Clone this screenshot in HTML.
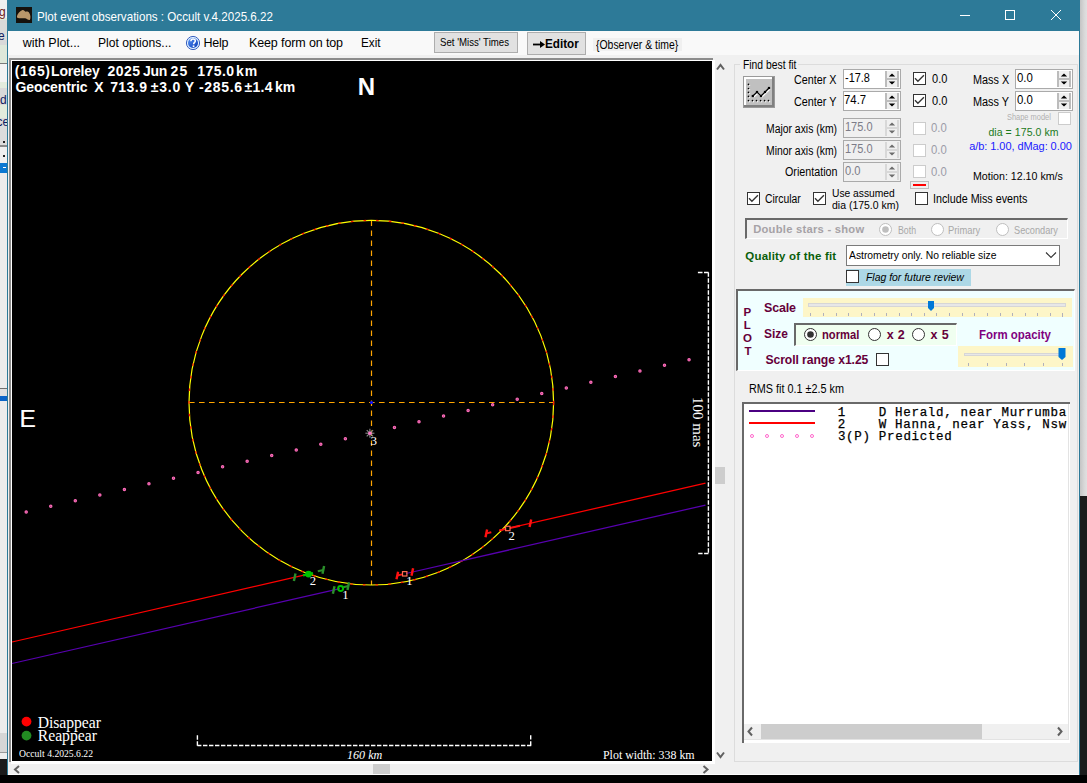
<!DOCTYPE html><html><head><meta charset="utf-8"><style>
html,body{margin:0;padding:0;}
body{width:1087px;height:783px;position:relative;overflow:hidden;background:#000;}
.r{position:absolute;}
.t{position:absolute;white-space:pre;}
svg{overflow:visible;}
</style></head><body>
<div class="r" style="left:0px;top:0px;width:7px;height:3px;background:#f0f0f0;"></div>
<div class="r" style="left:0px;top:3px;width:7px;height:15px;background:#efefef;"></div>
<div class="r" style="left:0px;top:18px;width:7px;height:2px;background:#dfe9d8;"></div>
<div class="r" style="left:0px;top:20px;width:7px;height:25px;background:#d9d9d9;"></div>
<div class="r" style="left:0px;top:45px;width:7px;height:17px;background:#dee8da;"></div>
<div class="r" style="left:0px;top:62px;width:7px;height:1px;background:#dee8da;"></div>
<div class="r" style="left:0px;top:63px;width:7px;height:1px;background:#7a7a7a;"></div>
<div class="r" style="left:0px;top:64px;width:7px;height:18px;background:#f3f3f3;"></div>
<div class="r" style="left:0px;top:82px;width:7px;height:6px;background:#e3ecdd;"></div>
<div class="r" style="left:0px;top:88px;width:7px;height:17px;background:#d9d9d9;"></div>
<div class="r" style="left:0px;top:105px;width:7px;height:13px;background:#e3ecdd;"></div>
<div class="r" style="left:0px;top:118px;width:7px;height:27px;background:#dcdcdc;"></div>
<div class="r" style="left:0px;top:145px;width:7px;height:2px;background:#8a8a8a;"></div>
<div class="r" style="left:0px;top:147px;width:7px;height:16px;background:#f0f0f0;"></div>
<div class="r" style="left:0px;top:163px;width:7px;height:10px;background:#0a78d2;"></div>
<div class="r" style="left:0px;top:173px;width:7px;height:215px;background:#ececec;"></div>
<div class="r" style="left:0px;top:388px;width:7px;height:1px;background:#707070;"></div>
<div class="r" style="left:0px;top:389px;width:7px;height:7px;background:#e0e0e0;"></div>
<div class="r" style="left:0px;top:396px;width:7px;height:5px;background:#0a64c8;"></div>
<div class="r" style="left:0px;top:401px;width:7px;height:332px;background:#ececec;"></div>
<div class="r" style="left:0px;top:733px;width:7px;height:19px;background:#d6d6d6;"></div>
<div class="r" style="left:0px;top:752px;width:7px;height:1px;background:#9a9a9a;"></div>
<div class="r" style="left:0px;top:753px;width:7px;height:6px;background:#eeeeee;"></div>
<div class="r" style="left:0px;top:759px;width:7px;height:24px;background:#1a1a1a;"></div>
<div class="r" style="left:0;top:0;width:7px;height:200px;overflow:hidden;"><div class="t" style="left:-3.78px;top:6px;font-family:'Liberation Sans', sans-serif;font-size:12px;line-height:12px;color:#6a1a1a;">ig</div>
<div class="t" style="left:-1.98px;top:30px;font-family:'Liberation Sans', sans-serif;font-size:12px;line-height:12px;color:#102060;">e</div>
<div class="t" style="left:-6.78px;top:94px;font-family:'Liberation Sans', sans-serif;font-size:12px;line-height:12px;color:#102060;">ud</div>
<div class="t" style="left:-3.48px;top:116px;font-family:'Liberation Sans', sans-serif;font-size:12px;line-height:12px;color:#102060;">ce</div>
<div class="r" style="left:3px;top:141px;width:2px;height:2px;background:#222;"></div>
<div class="r" style="left:3px;top:155px;width:2px;height:2px;background:#222;"></div>
<div class="r" style="left:3px;top:167px;width:3px;height:1px;background:#fff;"></div>
</div><div class="r" style="left:1080px;top:0px;width:7px;height:496px;background:linear-gradient(to right,#c4c4c4,#d8d8d8 60%,#e0e0e0);"></div>
<div class="r" style="left:1080px;top:496px;width:7px;height:287px;background:#1b1b1b;"></div>
<div class="r" style="left:0px;top:775px;width:1087px;height:8px;background:#000;"></div>
<div class="r" style="left:7px;top:0px;width:1073px;height:775px;background:#2d7a98;"></div>
<div class="r" style="left:8px;top:31px;width:1071px;height:743px;background:#f0f0f0;"></div>
<div class="r" style="left:8px;top:31px;width:1071px;height:24px;background:#f9f9f9;"></div>
<div class="r" style="left:8px;top:774px;width:1071px;height:1px;background:#fdfdfd;"></div>
<div class="t" style="left:36.77px;top:10px;font-family:'Liberation Sans', sans-serif;font-size:13px;line-height:13px;color:#fff;transform:scaleX(0.8928);transform-origin:0 0;">Plot event observations : Occult v.4.2025.6.22</div>
<svg class="r" style="left:16px;top:7px" width="16" height="16" viewBox="0 0 16 16"><rect width="16" height="16" fill="#15110c"/>
<path d="M1 9 C1.5 6.5 4 4 6.5 3 C8 2.8 8.8 4.2 9.5 4.8 C10.5 4.3 12 4 13 5.5 C14.5 7.5 15 11 13.8 13 C12 13.2 10.5 11.5 9 11.3 C7 11 4 11.5 2 11 C1 10.7 0.8 10 1 9Z" fill="#b9976a"/></svg>
<svg class="r" style="left:950px;top:0px" width="129" height="31" viewBox="950 0 129 31"><line x1="960" y1="15.5" x2="970" y2="15.5" stroke="#fff" stroke-width="1"/><rect x="1005.5" y="10.5" width="9" height="9" fill="none" stroke="#fff" stroke-width="1"/><line x1="1051" y1="10" x2="1061" y2="20" stroke="#fff" stroke-width="1"/><line x1="1061" y1="10" x2="1051" y2="20" stroke="#fff" stroke-width="1"/></svg>
<div class="t" style="left:22.80px;top:37px;font-family:'Liberation Sans', sans-serif;font-size:12.5px;line-height:12.5px;color:#000;letter-spacing:-0.033px;">with Plot...</div>
<div class="t" style="left:97.63px;top:37px;font-family:'Liberation Sans', sans-serif;font-size:12.5px;line-height:12.5px;color:#000;transform:scaleX(0.9698);transform-origin:0 0;">Plot options...</div>
<svg class="r" style="left:185px;top:35px" width="16" height="16" viewBox="0 0 16 16"><defs><linearGradient id="hg" x1="0" y1="0" x2="1" y2="1"><stop offset="0" stop-color="#5a96f5"/><stop offset="1" stop-color="#0838b8"/></linearGradient></defs><circle cx="8" cy="8" r="6.6" fill="#dbeeff" stroke="#3a60c0" stroke-width="1"/><circle cx="8" cy="8" r="5" fill="url(#hg)"/><path d="M5.9 6.2 C5.9 4.6 7 4 8.1 4 C9.4 4 10.3 4.8 10.3 5.9 C10.3 7.3 8.6 7.5 8.6 9.2" fill="none" stroke="#fff" stroke-width="1.5"/><rect x="7.7" y="10.4" width="1.7" height="1.7" fill="#fff"/></svg>
<div class="t" style="left:203.50px;top:37px;font-family:'Liberation Sans', sans-serif;font-size:12.5px;line-height:12.5px;color:#000;letter-spacing:-0.229px;">Help</div>
<div class="t" style="left:249.00px;top:37px;font-family:'Liberation Sans', sans-serif;font-size:12.5px;line-height:12.5px;color:#000;letter-spacing:-0.125px;">Keep form on top</div>
<div class="t" style="left:361.06px;top:37px;font-family:'Liberation Sans', sans-serif;font-size:12.5px;line-height:12.5px;color:#000;transform:scaleX(0.9367);transform-origin:0 0;">Exit</div>
<div class="r" style="left:434px;top:32px;width:84px;height:21px;background:#e1e1e1;border:1px solid #adadad;box-sizing:border-box;"></div>
<div class="t" style="left:440.37px;top:37px;font-family:'Liberation Sans', sans-serif;font-size:10.5px;line-height:10.5px;color:#000;transform:scaleX(0.9174);transform-origin:0 0;">Set &#x27;Miss&#x27; Times</div>
<div class="r" style="left:527px;top:32px;width:59px;height:23px;background:#e1e1e1;border:1px solid #adadad;box-sizing:border-box;"></div>
<div class="t" style="left:544.74px;top:38px;font-family:'Liberation Sans', sans-serif;font-size:12.5px;line-height:12.5px;color:#000;font-weight:bold;transform:scaleX(0.9367);transform-origin:0 0;">Editor</div>
<svg class="r" style="left:532px;top:39px" width="14" height="11" viewBox="0 0 14 11"><path d="M1 5.5 H10" stroke="#000" stroke-width="1.8"/><path d="M8 2 L13 5.5 L8 9Z" fill="#000"/></svg>
<div class="r" style="left:593px;top:38px;width:89px;height:13px;background:#f0f0f0;"></div>
<div class="t" style="left:595.84px;top:39px;font-family:'Liberation Sans', sans-serif;font-size:12px;line-height:12px;color:#000;transform:scaleX(0.8683);transform-origin:0 0;">{Observer &amp; time}</div>
<div class="r" style="left:9px;top:58px;width:704px;height:2px;background:#8c8c8c;"></div>
<div class="r" style="left:9px;top:58px;width:2px;height:704px;background:#8c8c8c;"></div>
<div class="r" style="left:11px;top:60px;width:704px;height:704px;background:#fff;"></div>
<div class="r" style="left:12px;top:61px;width:700px;height:700px;background:#000;"></div>
<div class="r" style="left:715px;top:61px;width:20px;height:700px;background:#f0f0f0;"></div>
<div class="r" style="left:715px;top:467px;width:10px;height:17px;background:#cdcdcd;"></div>
<div class="r" style="left:8px;top:764px;width:707px;height:10px;background:#f0f0f0;"></div>
<div class="r" style="left:373px;top:764px;width:17px;height:10px;background:#cdcdcd;"></div>
<svg class="r" style="left:0;top:0" width="1087" height="783" viewBox="0 0 1087 783"><polyline points="717,69.5 720.5,65 724,69.5" fill="none" stroke="#606060" stroke-width="2"/><polyline points="717,752.5 720.5,757 724,752.5" fill="none" stroke="#606060" stroke-width="2"/><polyline points="19,766 15,769.5 19,773" fill="none" stroke="#606060" stroke-width="2"/><polyline points="703.5,766 707.5,769.5 703.5,773" fill="none" stroke="#606060" stroke-width="2"/></svg>
<svg class="r" style="left:12px;top:61px" width="700" height="700" viewBox="12 61 700 700"><line x1="189" y1="402.5" x2="553.6" y2="402.5" stroke="#ffa500" stroke-width="1.2" stroke-dasharray="5.6 4.4"/><line x1="371.5" y1="220.4" x2="371.5" y2="585" stroke="#ffa500" stroke-width="1.2" stroke-dasharray="5.6 4.4"/><circle cx="371.3" cy="402.7" r="182.3" fill="none" stroke="#ffff00" stroke-width="1.2"/><circle cx="371.3" cy="402.7" r="182.3" fill="none" stroke="#ff1a00" stroke-width="1.3" stroke-dasharray="2.6 10.1"/><circle cx="371.5" cy="402.5" r="1.6" fill="#1010ff"/><line x1="12" y1="642.00" x2="305" y2="574.90" stroke="#ff0000" stroke-width="1.25"/><line x1="499" y1="530.48" x2="705.5" y2="483.19" stroke="#ff0000" stroke-width="1.25"/><line x1="12" y1="663.50" x2="340" y2="588.58" stroke="#5800b0" stroke-width="1.25"/><line x1="406" y1="573.51" x2="705.5" y2="505.10" stroke="#5800b0" stroke-width="1.25"/><circle cx="26.20" cy="512.00" r="1.15" fill="#9a4a80" stroke="#ff6ab8" stroke-width="1.2"/><circle cx="50.75" cy="506.36" r="1.15" fill="#9a4a80" stroke="#ff6ab8" stroke-width="1.2"/><circle cx="75.30" cy="500.72" r="1.15" fill="#9a4a80" stroke="#ff6ab8" stroke-width="1.2"/><circle cx="99.85" cy="495.08" r="1.15" fill="#9a4a80" stroke="#ff6ab8" stroke-width="1.2"/><circle cx="124.40" cy="489.43" r="1.15" fill="#9a4a80" stroke="#ff6ab8" stroke-width="1.2"/><circle cx="148.95" cy="483.79" r="1.15" fill="#9a4a80" stroke="#ff6ab8" stroke-width="1.2"/><circle cx="173.50" cy="478.15" r="1.15" fill="#9a4a80" stroke="#ff6ab8" stroke-width="1.2"/><circle cx="198.05" cy="472.51" r="1.15" fill="#9a4a80" stroke="#ff6ab8" stroke-width="1.2"/><circle cx="222.60" cy="466.87" r="1.15" fill="#9a4a80" stroke="#ff6ab8" stroke-width="1.2"/><circle cx="247.15" cy="461.23" r="1.15" fill="#9a4a80" stroke="#ff6ab8" stroke-width="1.2"/><circle cx="271.70" cy="455.58" r="1.15" fill="#9a4a80" stroke="#ff6ab8" stroke-width="1.2"/><circle cx="296.25" cy="449.94" r="1.15" fill="#9a4a80" stroke="#ff6ab8" stroke-width="1.2"/><circle cx="320.80" cy="444.30" r="1.15" fill="#9a4a80" stroke="#ff6ab8" stroke-width="1.2"/><circle cx="345.35" cy="438.66" r="1.15" fill="#9a4a80" stroke="#ff6ab8" stroke-width="1.2"/><circle cx="394.45" cy="427.38" r="1.15" fill="#9a4a80" stroke="#ff6ab8" stroke-width="1.2"/><circle cx="419.00" cy="421.73" r="1.15" fill="#9a4a80" stroke="#ff6ab8" stroke-width="1.2"/><circle cx="443.55" cy="416.09" r="1.15" fill="#9a4a80" stroke="#ff6ab8" stroke-width="1.2"/><circle cx="468.10" cy="410.45" r="1.15" fill="#9a4a80" stroke="#ff6ab8" stroke-width="1.2"/><circle cx="492.65" cy="404.81" r="1.15" fill="#9a4a80" stroke="#ff6ab8" stroke-width="1.2"/><circle cx="517.20" cy="399.17" r="1.15" fill="#9a4a80" stroke="#ff6ab8" stroke-width="1.2"/><circle cx="541.75" cy="393.53" r="1.15" fill="#9a4a80" stroke="#ff6ab8" stroke-width="1.2"/><circle cx="566.30" cy="387.89" r="1.15" fill="#9a4a80" stroke="#ff6ab8" stroke-width="1.2"/><circle cx="590.85" cy="382.24" r="1.15" fill="#9a4a80" stroke="#ff6ab8" stroke-width="1.2"/><circle cx="615.40" cy="376.60" r="1.15" fill="#9a4a80" stroke="#ff6ab8" stroke-width="1.2"/><circle cx="639.95" cy="370.96" r="1.15" fill="#9a4a80" stroke="#ff6ab8" stroke-width="1.2"/><circle cx="664.50" cy="365.32" r="1.15" fill="#9a4a80" stroke="#ff6ab8" stroke-width="1.2"/><circle cx="689.05" cy="359.68" r="1.15" fill="#9a4a80" stroke="#ff6ab8" stroke-width="1.2"/><line x1="365.40" y1="433.20" x2="374.40" y2="433.20" stroke="#8c8c8c" stroke-width="1.1"/><line x1="366.72" y1="430.02" x2="373.08" y2="436.38" stroke="#8c8c8c" stroke-width="1.1"/><line x1="369.90" y1="428.70" x2="369.90" y2="437.70" stroke="#8c8c8c" stroke-width="1.1"/><line x1="373.08" y1="430.02" x2="366.72" y2="436.38" stroke="#8c8c8c" stroke-width="1.1"/><circle cx="369.9" cy="433.2" r="1.8" fill="#ff77cc"/><line x1="295.50" y1="573.46" x2="293.90" y2="581.06" stroke="#2a8f2a" stroke-width="2.4"/><line x1="324.10" y1="566.11" x2="322.50" y2="573.71" stroke="#2a8f2a" stroke-width="2.4"/><line x1="323.30" y1="569.91" x2="317.80" y2="571.17" stroke="#2a8f2a" stroke-width="2"/><circle cx="308.5" cy="574.10" r="2.6" fill="#00c000" stroke="#00c000" stroke-width="1.6"/><line x1="303" y1="575.36" x2="313" y2="573.07" stroke="#00c000" stroke-width="2.2"/><line x1="334.50" y1="586.22" x2="332.90" y2="593.82" stroke="#2a8f2a" stroke-width="2.4"/><line x1="349.10" y1="582.29" x2="347.50" y2="589.89" stroke="#2a8f2a" stroke-width="2.4"/><line x1="348.30" y1="586.09" x2="343.30" y2="587.23" stroke="#2a8f2a" stroke-width="2"/><circle cx="340.6" cy="588.45" r="2.5" fill="none" stroke="#00c000" stroke-width="1.9"/><line x1="398.10" y1="571.70" x2="396.50" y2="579.30" stroke="#ff1010" stroke-width="2.4"/><line x1="397.30" y1="575.50" x2="402.30" y2="574.35" stroke="#ff1010" stroke-width="2"/><line x1="413.10" y1="568.27" x2="411.50" y2="575.87" stroke="#ff1010" stroke-width="2.4"/><rect x="402.5" y="571.61" width="4.4" height="4.4" fill="none" stroke="#ff6a50" stroke-width="1.2"/><line x1="487.10" y1="529.59" x2="485.50" y2="537.19" stroke="#ff1010" stroke-width="2.4"/><line x1="486.30" y1="533.39" x2="491.30" y2="532.24" stroke="#ff1010" stroke-width="2"/><line x1="531.20" y1="519.49" x2="529.60" y2="527.09" stroke="#ff1010" stroke-width="2.4"/><line x1="499.5" y1="530.36" x2="520" y2="525.67" stroke="#ff1010" stroke-width="2"/><rect x="505.6" y="526.26" width="4.4" height="4.4" fill="#000" stroke="#ff6a50" stroke-width="1.2"/><line x1="708.4" y1="272.5" x2="708.4" y2="553.5" fill="none" stroke="#fff" stroke-width="1.4" stroke-dasharray="4.4 1.6" stroke-dashoffset="0.2"/><line x1="697.9" y1="272.5" x2="709" y2="272.5" fill="none" stroke="#fff" stroke-width="1.4" stroke-dasharray="4.6 1.5"/><line x1="698.2" y1="553.5" x2="709" y2="553.5" fill="none" stroke="#fff" stroke-width="1.4" stroke-dasharray="4.4 1.5"/><line x1="197.4" y1="745.5" x2="531.2" y2="745.5" fill="none" stroke="#fff" stroke-width="1.4" stroke-dasharray="4.4 1.6" stroke-dashoffset="0.4"/><line x1="197.4" y1="735.2" x2="197.4" y2="746" fill="none" stroke="#fff" stroke-width="1.4" stroke-dasharray="4.6 1.4"/><line x1="530.7" y1="735.2" x2="530.7" y2="746" fill="none" stroke="#fff" stroke-width="1.4" stroke-dasharray="4.4 1.6"/><circle cx="26.5" cy="721.6" r="4.9" fill="#ff0000"/><circle cx="26.5" cy="735.6" r="4.9" fill="#228b22"/></svg>
<div class="t" style="left:14.70px;top:64px;font-family:'Liberation Sans', sans-serif;font-size:14px;line-height:14px;color:#fff;font-weight:bold;letter-spacing:0.652px;">(165)</div>
<div class="t" style="left:51.09px;top:64px;font-family:'Liberation Sans', sans-serif;font-size:14px;line-height:14px;color:#fff;font-weight:bold;letter-spacing:-0.198px;">Loreley</div>
<div class="t" style="left:107.41px;top:64px;font-family:'Liberation Sans', sans-serif;font-size:14px;line-height:14px;color:#fff;font-weight:bold;letter-spacing:0.463px;">2025</div>
<div class="t" style="left:142.99px;top:64px;font-family:'Liberation Sans', sans-serif;font-size:14px;line-height:14px;color:#fff;font-weight:bold;letter-spacing:-0.250px;">Jun</div>
<div class="t" style="left:170.41px;top:64px;font-family:'Liberation Sans', sans-serif;font-size:14px;line-height:14px;color:#fff;font-weight:bold;letter-spacing:1.200px;">25</div>
<div class="t" style="left:197.26px;top:64px;font-family:'Liberation Sans', sans-serif;font-size:14px;line-height:14px;color:#fff;font-weight:bold;letter-spacing:0.450px;">175.0</div>
<div class="t" style="left:236.12px;top:64px;font-family:'Liberation Sans', sans-serif;font-size:14px;line-height:14px;color:#fff;font-weight:bold;letter-spacing:0.790px;">km</div>
<div class="t" style="left:15.54px;top:80px;font-family:'Liberation Sans', sans-serif;font-size:14px;line-height:14px;color:#fff;font-weight:bold;letter-spacing:-0.119px;">Geocentric</div>
<div class="t" style="left:94.26px;top:80px;font-family:'Liberation Sans', sans-serif;font-size:14px;line-height:14px;color:#fff;font-weight:bold;">X</div>
<div class="t" style="left:110.14px;top:80px;font-family:'Liberation Sans', sans-serif;font-size:14px;line-height:14px;color:#fff;font-weight:bold;letter-spacing:0.462px;">713.9</div>
<div class="t" style="left:150.65px;top:80px;font-family:'Liberation Sans', sans-serif;font-size:14px;line-height:14px;color:#fff;font-weight:bold;letter-spacing:0.817px;">±3.0</div>
<div class="t" style="left:184.69px;top:80px;font-family:'Liberation Sans', sans-serif;font-size:14px;line-height:14px;color:#fff;font-weight:bold;">Y</div>
<div class="t" style="left:199.04px;top:80px;font-family:'Liberation Sans', sans-serif;font-size:14px;line-height:14px;color:#fff;font-weight:bold;letter-spacing:0.672px;">-285.6</div>
<div class="t" style="left:244.45px;top:80px;font-family:'Liberation Sans', sans-serif;font-size:14px;line-height:14px;color:#fff;font-weight:bold;letter-spacing:0.320px;">±1.4</div>
<div class="t" style="left:275.12px;top:80px;font-family:'Liberation Sans', sans-serif;font-size:14px;line-height:14px;color:#fff;font-weight:bold;letter-spacing:-0.210px;">km</div>
<div class="t" style="left:357.74px;top:75px;font-family:'Liberation Sans', sans-serif;font-size:24px;line-height:24px;color:#fff;font-weight:bold;">N</div>
<div class="t" style="left:19.54px;top:407px;font-family:'Liberation Sans', sans-serif;font-size:24.5px;line-height:24.5px;color:#fff;-webkit-text-stroke:0.2px #fff;">E</div>
<div class="t" style="left:37.73px;top:715px;font-family:'Liberation Serif', serif;font-size:15.7px;line-height:15.7px;color:#fff;letter-spacing:-0.054px;">Disappear</div>
<div class="t" style="left:37.73px;top:728px;font-family:'Liberation Serif', serif;font-size:15.7px;line-height:15.7px;color:#fff;">Reappear</div>
<div class="t" style="left:18.51px;top:749px;font-family:'Liberation Serif', serif;font-size:10.3px;line-height:10.3px;color:#fff;transform:scaleX(0.9375);transform-origin:0 0;">Occult 4.2025.6.22</div>
<div class="t" style="left:346.98px;top:748px;font-family:'Liberation Serif', serif;font-size:13.5px;line-height:13.5px;color:#fff;font-style:italic;transform:scaleX(0.8972);transform-origin:0 0;">160 km</div>
<div class="t" style="left:603.44px;top:749px;font-family:'Liberation Serif', serif;font-size:12.8px;line-height:12.8px;color:#fff;transform:scaleX(0.9304);transform-origin:0 0;">Plot width: 338 km</div>
<div class="t" style="left:370.52px;top:434px;font-family:'Liberation Serif', serif;font-size:13px;line-height:13px;color:#fff;">3</div>
<div class="t" style="left:309.63px;top:575px;font-family:'Liberation Serif', serif;font-size:12.7px;line-height:12.7px;color:#fff;">2</div>
<div class="t" style="left:342.22px;top:589px;font-family:'Liberation Serif', serif;font-size:12.7px;line-height:12.7px;color:#fff;">1</div>
<div class="t" style="left:406.22px;top:575px;font-family:'Liberation Serif', serif;font-size:12.7px;line-height:12.7px;color:#fff;">1</div>
<div class="t" style="left:508.53px;top:530px;font-family:'Liberation Serif', serif;font-size:12.7px;line-height:12.7px;color:#fff;">2</div>
<div class="t" style="left:692.5px;top:397px;font-family:'Liberation Serif',serif;font-size:15px;line-height:15px;color:#fff;transform-origin:0 0;transform:rotate(90deg) translate(0,-12.45px);">100 mas</div>
<div class="r" style="left:734px;top:64px;width:344px;height:698px;border:1px solid #dcdcdc;box-sizing:border-box;"></div>
<div class="r" style="left:740px;top:60px;width:58px;height:10px;background:#f0f0f0;"></div>
<div class="t" style="left:742.67px;top:59px;font-family:'Liberation Sans', sans-serif;font-size:12.5px;line-height:12.5px;color:#000;transform:scaleX(0.8268);transform-origin:0 0;">Find best fit</div>
<div class="r" style="left:743px;top:76px;width:32px;height:32px;background:#c0c0c0;border:1px solid #9a9a9a;box-sizing:border-box;"></div>
<div class="r" style="left:744px;top:77px;width:29px;height:2px;background:#fff;"></div>
<div class="r" style="left:744px;top:77px;width:2px;height:29px;background:#fff;"></div>
<div class="r" style="left:772px;top:77px;width:2px;height:30px;background:#808080;"></div>
<div class="r" style="left:744px;top:105px;width:30px;height:2px;background:#808080;"></div>
<svg class="r" style="left:743px;top:76px" width="32" height="32" viewBox="0 0 32 32"><polyline points="10.8,21 15,17 19,21 23,17 27,13" fill="none" stroke="#fff" stroke-width="1.2"/><circle cx="6.3" cy="9.200000000000001" r="0.9" fill="#fff"/><circle cx="6.3" cy="13.3" r="0.9" fill="#fff"/><circle cx="6.3" cy="17.2" r="0.9" fill="#fff"/><circle cx="6.3" cy="21.2" r="0.9" fill="#fff"/><circle cx="6.3" cy="25.400000000000002" r="0.9" fill="#fff"/><circle cx="10.3" cy="25.400000000000002" r="0.9" fill="#fff"/><circle cx="14.3" cy="25.400000000000002" r="0.9" fill="#fff"/><circle cx="18.400000000000002" cy="25.400000000000002" r="0.9" fill="#fff"/><circle cx="22.400000000000002" cy="25.400000000000002" r="0.9" fill="#fff"/><circle cx="26.3" cy="25.400000000000002" r="0.9" fill="#fff"/><circle cx="5.5" cy="8.4" r="0.85" fill="#000"/><circle cx="5.5" cy="12.5" r="0.85" fill="#000"/><circle cx="5.5" cy="16.4" r="0.85" fill="#000"/><circle cx="5.5" cy="20.4" r="0.85" fill="#000"/><circle cx="5.5" cy="24.6" r="0.85" fill="#000"/><circle cx="9.5" cy="24.6" r="0.85" fill="#000"/><circle cx="13.5" cy="24.6" r="0.85" fill="#000"/><circle cx="17.6" cy="24.6" r="0.85" fill="#000"/><circle cx="21.6" cy="24.6" r="0.85" fill="#000"/><circle cx="25.5" cy="24.6" r="0.85" fill="#000"/><polyline points="9.8,20 14,16 18,20 22,16 26,12" fill="none" stroke="#000" stroke-width="1.2"/><rect x="8.700000000000001" y="18.9" width="2.2" height="2.2" fill="#000"/><rect x="12.9" y="14.9" width="2.2" height="2.2" fill="#000"/><rect x="16.9" y="18.9" width="2.2" height="2.2" fill="#000"/><rect x="20.9" y="14.9" width="2.2" height="2.2" fill="#000"/><rect x="24.9" y="10.9" width="2.2" height="2.2" fill="#000"/></svg>
<div class="t" style="left:794.46px;top:74px;font-family:'Liberation Sans', sans-serif;font-size:12.5px;line-height:12.5px;color:#000;transform:scaleX(0.8609);transform-origin:0 0;">Center X</div>
<div class="t" style="left:794.46px;top:96px;font-family:'Liberation Sans', sans-serif;font-size:12.5px;line-height:12.5px;color:#000;transform:scaleX(0.8654);transform-origin:0 0;">Center Y</div>
<div class="r" style="left:843px;top:69px;width:58px;height:20px;background:#fff;border:1px solid #aaaaaa;box-sizing:border-box;"></div>
<div class="r" style="left:885px;top:71px;width:14px;height:16px;background:#f0f0f0;border-left:2px solid #bcbcbc;border-right:2px solid #bcbcbc;box-sizing:border-box;"></div>
<div class="r" style="left:885px;top:78.0px;width:14px;height:2px;background:#bdbdbd;"></div>
<svg class="r" style="left:885px;top:71px" width="14" height="16" viewBox="885 71 14 16"><path d="M888.8 76.6 L892 73.4 L895.2 76.6Z M888.8 81.4 L892 84.6 L895.2 81.4Z" fill="#000"/></svg><div class="t" style="left:844.51px;top:71px;font-family:'Liberation Sans', sans-serif;font-size:13.2px;line-height:13.2px;color:#000;transform:scaleX(0.8283);transform-origin:0 0;">-17.8</div>
<div class="r" style="left:843px;top:91px;width:58px;height:20px;background:#fff;border:1px solid #aaaaaa;box-sizing:border-box;"></div>
<div class="r" style="left:885px;top:93px;width:14px;height:16px;background:#f0f0f0;border-left:2px solid #bcbcbc;border-right:2px solid #bcbcbc;box-sizing:border-box;"></div>
<div class="r" style="left:885px;top:100.0px;width:14px;height:2px;background:#bdbdbd;"></div>
<svg class="r" style="left:885px;top:93px" width="14" height="16" viewBox="885 93 14 16"><path d="M888.8 98.6 L892 95.4 L895.2 98.6Z M888.8 103.4 L892 106.6 L895.2 103.4Z" fill="#000"/></svg><div class="t" style="left:844.43px;top:93px;font-family:'Liberation Sans', sans-serif;font-size:13.2px;line-height:13.2px;color:#000;transform:scaleX(0.8623);transform-origin:0 0;">74.7</div>
<div class="r" style="left:913px;top:72px;width:13px;height:13px;background:#fff;border:1px solid #333;box-sizing:border-box;"></div>
<svg class="r" style="left:913px;top:72px" width="13" height="13" viewBox="0 0 13 13"><polyline points="2,6.3 4.9,9.2 10.9,3.2" fill="none" stroke="#333" stroke-width="1.35"/></svg><div class="r" style="left:913px;top:94.3px;width:13px;height:13px;background:#fff;border:1px solid #333;box-sizing:border-box;"></div>
<svg class="r" style="left:913px;top:94.3px" width="13" height="13" viewBox="0 0 13 13"><polyline points="2,6.3 4.9,9.2 10.9,3.2" fill="none" stroke="#333" stroke-width="1.35"/></svg><div class="t" style="left:931.66px;top:72px;font-family:'Liberation Sans', sans-serif;font-size:13.2px;line-height:13.2px;color:#000;transform:scaleX(0.8353);transform-origin:0 0;">0.0</div>
<div class="t" style="left:931.66px;top:94px;font-family:'Liberation Sans', sans-serif;font-size:13.2px;line-height:13.2px;color:#000;transform:scaleX(0.8353);transform-origin:0 0;">0.0</div>
<div class="t" style="left:973.13px;top:74px;font-family:'Liberation Sans', sans-serif;font-size:12.5px;line-height:12.5px;color:#000;transform:scaleX(0.8669);transform-origin:0 0;">Mass X</div>
<div class="t" style="left:973.13px;top:96px;font-family:'Liberation Sans', sans-serif;font-size:12.5px;line-height:12.5px;color:#000;transform:scaleX(0.8709);transform-origin:0 0;">Mass Y</div>
<div class="r" style="left:1015px;top:69px;width:58px;height:20px;background:#fff;border:1px solid #aaaaaa;box-sizing:border-box;"></div>
<div class="r" style="left:1057px;top:71px;width:14px;height:16px;background:#f0f0f0;border-left:2px solid #bcbcbc;border-right:2px solid #bcbcbc;box-sizing:border-box;"></div>
<div class="r" style="left:1057px;top:78.0px;width:14px;height:2px;background:#bdbdbd;"></div>
<svg class="r" style="left:1057px;top:71px" width="14" height="16" viewBox="1057 71 14 16"><path d="M1060.8 76.6 L1064 73.4 L1067.2 76.6Z M1060.8 81.4 L1064 84.6 L1067.2 81.4Z" fill="#000"/></svg><div class="t" style="left:1016.54px;top:71px;font-family:'Liberation Sans', sans-serif;font-size:13.2px;line-height:13.2px;color:#000;transform:scaleX(0.8642);transform-origin:0 0;">0.0</div>
<div class="r" style="left:1015px;top:91px;width:58px;height:20px;background:#fff;border:1px solid #aaaaaa;box-sizing:border-box;"></div>
<div class="r" style="left:1057px;top:93px;width:14px;height:16px;background:#f0f0f0;border-left:2px solid #bcbcbc;border-right:2px solid #bcbcbc;box-sizing:border-box;"></div>
<div class="r" style="left:1057px;top:100.0px;width:14px;height:2px;background:#bdbdbd;"></div>
<svg class="r" style="left:1057px;top:93px" width="14" height="16" viewBox="1057 93 14 16"><path d="M1060.8 98.6 L1064 95.4 L1067.2 98.6Z M1060.8 103.4 L1064 106.6 L1067.2 103.4Z" fill="#000"/></svg><div class="t" style="left:1016.54px;top:93px;font-family:'Liberation Sans', sans-serif;font-size:13.2px;line-height:13.2px;color:#000;transform:scaleX(0.8642);transform-origin:0 0;">0.0</div>
<div class="t" style="left:1006.67px;top:113px;font-family:'Liberation Sans', sans-serif;font-size:8.5px;line-height:8.5px;color:#b0b0b0;transform:scaleX(0.8752);transform-origin:0 0;">Shape model</div>
<div class="r" style="left:1058px;top:111.5px;width:13px;height:13px;background:#fff;border:1px solid #cccccc;box-sizing:border-box;"></div>
<div class="t" style="left:766.47px;top:123px;font-family:'Liberation Sans', sans-serif;font-size:12.5px;line-height:12.5px;color:#000;transform:scaleX(0.8311);transform-origin:0 0;">Major axis (km)</div>
<div class="t" style="left:766.47px;top:145px;font-family:'Liberation Sans', sans-serif;font-size:12.5px;line-height:12.5px;color:#000;transform:scaleX(0.8311);transform-origin:0 0;">Minor axis (km)</div>
<div class="t" style="left:785.02px;top:166px;font-family:'Liberation Sans', sans-serif;font-size:12.5px;line-height:12.5px;color:#000;transform:scaleX(0.8577);transform-origin:0 0;">Orientation</div>
<div class="r" style="left:843px;top:118px;width:58px;height:20px;background:#f0f0f0;border:1px solid #aaaaaa;box-sizing:border-box;"></div>
<div class="r" style="left:885px;top:120px;width:14px;height:16px;background:#f0f0f0;border-left:2px solid #d8d8d8;border-right:2px solid #d8d8d8;box-sizing:border-box;"></div>
<div class="r" style="left:885px;top:127.0px;width:14px;height:2px;background:#d8d8d8;"></div>
<svg class="r" style="left:885px;top:120px" width="14" height="16" viewBox="885 120 14 16"><path d="M888.8 125.6 L892 122.4 L895.2 125.6Z M888.8 130.4 L892 133.6 L895.2 130.4Z" fill="#6d6d6d"/></svg><div class="t" style="left:845.07px;top:120px;font-family:'Liberation Sans', sans-serif;font-size:13.2px;line-height:13.2px;color:#7c7c88;transform:scaleX(0.8337);transform-origin:0 0;">175.0</div>
<div class="r" style="left:843px;top:140px;width:58px;height:20px;background:#f0f0f0;border:1px solid #aaaaaa;box-sizing:border-box;"></div>
<div class="r" style="left:885px;top:142px;width:14px;height:16px;background:#f0f0f0;border-left:2px solid #d8d8d8;border-right:2px solid #d8d8d8;box-sizing:border-box;"></div>
<div class="r" style="left:885px;top:149.0px;width:14px;height:2px;background:#d8d8d8;"></div>
<svg class="r" style="left:885px;top:142px" width="14" height="16" viewBox="885 142 14 16"><path d="M888.8 147.6 L892 144.4 L895.2 147.6Z M888.8 152.4 L892 155.6 L895.2 152.4Z" fill="#6d6d6d"/></svg><div class="t" style="left:845.07px;top:142px;font-family:'Liberation Sans', sans-serif;font-size:13.2px;line-height:13.2px;color:#7c7c88;transform:scaleX(0.8337);transform-origin:0 0;">175.0</div>
<div class="r" style="left:843px;top:162px;width:58px;height:20px;background:#f0f0f0;border:1px solid #aaaaaa;box-sizing:border-box;"></div>
<div class="r" style="left:885px;top:164px;width:14px;height:16px;background:#f0f0f0;border-left:2px solid #d8d8d8;border-right:2px solid #d8d8d8;box-sizing:border-box;"></div>
<div class="r" style="left:885px;top:171.0px;width:14px;height:2px;background:#d8d8d8;"></div>
<svg class="r" style="left:885px;top:164px" width="14" height="16" viewBox="885 164 14 16"><path d="M888.8 169.6 L892 166.4 L895.2 169.6Z M888.8 174.4 L892 177.6 L895.2 174.4Z" fill="#6d6d6d"/></svg><div class="t" style="left:844.55px;top:164px;font-family:'Liberation Sans', sans-serif;font-size:13.2px;line-height:13.2px;color:#7c7c88;transform:scaleX(0.8469);transform-origin:0 0;">0.0</div>
<div class="r" style="left:913px;top:121.5px;width:13px;height:13px;background:#fff;border:1px solid #cccccc;box-sizing:border-box;"></div>
<div class="t" style="left:931.45px;top:122px;font-family:'Liberation Sans', sans-serif;font-size:12.5px;line-height:12.5px;color:#9c9ca8;transform:scaleX(0.9065);transform-origin:0 0;">0.0</div>
<div class="r" style="left:913px;top:143.5px;width:13px;height:13px;background:#fff;border:1px solid #cccccc;box-sizing:border-box;"></div>
<div class="t" style="left:931.45px;top:144px;font-family:'Liberation Sans', sans-serif;font-size:12.5px;line-height:12.5px;color:#9c9ca8;transform:scaleX(0.9065);transform-origin:0 0;">0.0</div>
<div class="r" style="left:913px;top:165px;width:13px;height:13px;background:#fff;border:1px solid #cccccc;box-sizing:border-box;"></div>
<div class="t" style="left:931.45px;top:166px;font-family:'Liberation Sans', sans-serif;font-size:12.5px;line-height:12.5px;color:#9c9ca8;transform:scaleX(0.9065);transform-origin:0 0;">0.0</div>
<div class="r" style="left:910px;top:181px;width:19px;height:8px;background:#efefef;border:1px solid #bdbdbd;box-sizing:border-box;"></div>
<div class="r" style="left:913px;top:184px;width:13px;height:2px;background:#ff0000;"></div>
<div class="t" style="left:988.38px;top:127px;font-family:'Liberation Sans', sans-serif;font-size:10.5px;line-height:10.5px;color:#1a7a1a;letter-spacing:0.078px;">dia = 175.0 km</div>
<div class="t" style="left:969.26px;top:141px;font-family:'Liberation Sans', sans-serif;font-size:11px;line-height:11px;color:#1a1aff;letter-spacing:-0.071px;">a/b: 1.00, dMag: 0.00</div>
<div class="t" style="left:973.45px;top:170px;font-family:'Liberation Sans', sans-serif;font-size:11.6px;line-height:11.6px;color:#000;transform:scaleX(0.9174);transform-origin:0 0;">Motion: 12.10 km/s</div>
<div class="r" style="left:747px;top:192px;width:13px;height:13px;background:#fff;border:1px solid #333;box-sizing:border-box;"></div>
<svg class="r" style="left:747px;top:192px" width="13" height="13" viewBox="0 0 13 13"><polyline points="2,6.3 4.9,9.2 10.9,3.2" fill="none" stroke="#333" stroke-width="1.35"/></svg><div class="t" style="left:765.08px;top:193px;font-family:'Liberation Sans', sans-serif;font-size:12.5px;line-height:12.5px;color:#000;transform:scaleX(0.8308);transform-origin:0 0;">Circular</div>
<div class="r" style="left:813px;top:192px;width:13px;height:13px;background:#fff;border:1px solid #333;box-sizing:border-box;"></div>
<svg class="r" style="left:813px;top:192px" width="13" height="13" viewBox="0 0 13 13"><polyline points="2,6.3 4.9,9.2 10.9,3.2" fill="none" stroke="#333" stroke-width="1.35"/></svg><div class="t" style="left:831.83px;top:188px;font-family:'Liberation Sans', sans-serif;font-size:11px;line-height:11px;color:#000;transform:scaleX(0.9334);transform-origin:0 0;">Use assumed</div>
<div class="t" style="left:831.88px;top:200px;font-family:'Liberation Sans', sans-serif;font-size:11px;line-height:11px;color:#000;transform:scaleX(0.9524);transform-origin:0 0;">dia (175.0 km)</div>
<div class="r" style="left:915px;top:192.3px;width:13px;height:13px;background:#fff;border:1px solid #333;box-sizing:border-box;"></div>
<div class="t" style="left:933.43px;top:193px;font-family:'Liberation Sans', sans-serif;font-size:12.5px;line-height:12.5px;color:#000;transform:scaleX(0.8596);transform-origin:0 0;">Include Miss events</div>
<div class="r" style="left:745px;top:218px;width:323px;height:21px;background:#f0f0f0;border-top:2px solid #696969;border-left:2px solid #696969;border-right:1px solid #fff;border-bottom:1px solid #fff;box-sizing:border-box;"></div>
<div class="t" style="left:753.17px;top:224px;font-family:'Liberation Sans', sans-serif;font-size:11.2px;line-height:11.2px;color:#a6a2a6;font-weight:bold;letter-spacing:0.260px;">Double stars - show</div>
<svg class="r" style="left:879px;top:223px" width="13" height="13" viewBox="0 0 13 13"><circle cx="6.5" cy="6.5" r="6" fill="#fff" stroke="#bfbfbf" stroke-width="1"/><circle cx="6.5" cy="6.5" r="3.3" fill="#bfbfbf"/></svg><div class="t" style="left:898.30px;top:225px;font-family:'Liberation Sans', sans-serif;font-size:10.5px;line-height:10.5px;color:#a8a8a8;transform:scaleX(0.8355);transform-origin:0 0;">Both</div>
<svg class="r" style="left:931px;top:223.3px" width="13" height="13" viewBox="0 0 13 13"><circle cx="6.5" cy="6.5" r="6" fill="#fff" stroke="#bfbfbf" stroke-width="1"/></svg><div class="t" style="left:948.25px;top:225px;font-family:'Liberation Sans', sans-serif;font-size:10.5px;line-height:10.5px;color:#a8a8a8;transform:scaleX(0.8915);transform-origin:0 0;">Primary</div>
<svg class="r" style="left:996px;top:223.3px" width="13" height="13" viewBox="0 0 13 13"><circle cx="6.5" cy="6.5" r="6" fill="#fff" stroke="#bfbfbf" stroke-width="1"/></svg><div class="t" style="left:1013.59px;top:225px;font-family:'Liberation Sans', sans-serif;font-size:10.5px;line-height:10.5px;color:#a8a8a8;transform:scaleX(0.8749);transform-origin:0 0;">Secondary</div>
<div class="t" style="left:745.34px;top:251px;font-family:'Liberation Sans', sans-serif;font-size:11.5px;line-height:11.5px;color:#0a5e0a;font-weight:bold;letter-spacing:0.192px;">Quality of the fit</div>
<div class="r" style="left:846px;top:245px;width:214px;height:21px;background:#fff;border:1px solid #7a7a7a;box-sizing:border-box;"></div>
<div class="t" style="left:849.10px;top:250px;font-family:'Liberation Sans', sans-serif;font-size:11.5px;line-height:11.5px;color:#000;transform:scaleX(0.8986);transform-origin:0 0;">Astrometry only. No reliable size</div>
<svg class="r" style="left:1044px;top:250px" width="14" height="10" viewBox="0 0 14 10"><polyline points="2,2.5 7,7.5 12,2.5" fill="none" stroke="#333" stroke-width="1.1"/></svg>
<div class="r" style="left:846px;top:269px;width:125px;height:17px;background:#add8e6;"></div>
<div class="r" style="left:846px;top:270.4px;width:13px;height:13px;background:#fff;border:1px solid #333;box-sizing:border-box;"></div>
<div class="t" style="left:865.89px;top:271px;font-family:'Liberation Sans', sans-serif;font-size:11.7px;line-height:11.7px;color:#000;font-style:italic;transform:scaleX(0.8915);transform-origin:0 0;">Flag for future review</div>
<div class="r" style="left:736px;top:289px;width:339px;height:82px;background:#f0ffff;border-top:2px solid #696969;border-left:2px solid #696969;border-right:1px solid #fff;border-bottom:1px solid #fff;box-sizing:border-box;"></div>
<div class="t" style="left:743.45px;top:307px;font-family:'Liberation Sans', sans-serif;font-size:11.5px;line-height:11.5px;color:#66003a;font-weight:bold;">P</div>
<div class="t" style="left:743.75px;top:320px;font-family:'Liberation Sans', sans-serif;font-size:11.5px;line-height:11.5px;color:#66003a;font-weight:bold;">L</div>
<div class="t" style="left:743.09px;top:333px;font-family:'Liberation Sans', sans-serif;font-size:11.5px;line-height:11.5px;color:#66003a;font-weight:bold;">O</div>
<div class="t" style="left:744.38px;top:346px;font-family:'Liberation Sans', sans-serif;font-size:11.5px;line-height:11.5px;color:#66003a;font-weight:bold;">T</div>
<div class="t" style="left:764.12px;top:302px;font-family:'Liberation Sans', sans-serif;font-size:12.5px;line-height:12.5px;color:#66003a;font-weight:bold;letter-spacing:-0.194px;">Scale</div>
<div class="r" style="left:803px;top:298px;width:269px;height:19px;background:#fdf6c8;"></div>
<div class="r" style="left:808px;top:303px;width:258px;height:4px;background:#e7e7e7;border:1px solid #d6d6d6;box-sizing:border-box;"></div>
<div class="r" style="left:810px;top:313px;width:1px;height:3px;background:#b0b0bc;"></div>
<div class="r" style="left:823px;top:313px;width:1px;height:3px;background:#b0b0bc;"></div>
<div class="r" style="left:836px;top:313px;width:1px;height:3px;background:#b0b0bc;"></div>
<div class="r" style="left:848px;top:313px;width:1px;height:3px;background:#b0b0bc;"></div>
<div class="r" style="left:861px;top:313px;width:1px;height:3px;background:#b0b0bc;"></div>
<div class="r" style="left:874px;top:313px;width:1px;height:3px;background:#b0b0bc;"></div>
<div class="r" style="left:886px;top:313px;width:1px;height:3px;background:#b0b0bc;"></div>
<div class="r" style="left:899px;top:313px;width:1px;height:3px;background:#b0b0bc;"></div>
<div class="r" style="left:911px;top:313px;width:1px;height:3px;background:#b0b0bc;"></div>
<div class="r" style="left:924px;top:313px;width:1px;height:3px;background:#b0b0bc;"></div>
<div class="r" style="left:936px;top:313px;width:1px;height:3px;background:#b0b0bc;"></div>
<div class="r" style="left:949px;top:313px;width:1px;height:3px;background:#b0b0bc;"></div>
<div class="r" style="left:962px;top:313px;width:1px;height:3px;background:#b0b0bc;"></div>
<div class="r" style="left:974px;top:313px;width:1px;height:3px;background:#b0b0bc;"></div>
<div class="r" style="left:987px;top:313px;width:1px;height:3px;background:#b0b0bc;"></div>
<div class="r" style="left:1000px;top:313px;width:1px;height:3px;background:#b0b0bc;"></div>
<div class="r" style="left:1012px;top:313px;width:1px;height:3px;background:#b0b0bc;"></div>
<div class="r" style="left:1025px;top:313px;width:1px;height:3px;background:#b0b0bc;"></div>
<div class="r" style="left:1037px;top:313px;width:1px;height:3px;background:#b0b0bc;"></div>
<div class="r" style="left:1050px;top:313px;width:1px;height:3px;background:#b0b0bc;"></div>
<div class="r" style="left:1062px;top:313px;width:1px;height:4px;background:#b0b0bc;"></div>
<svg class="r" style="left:927px;top:300px" width="8" height="12" viewBox="0 0 8 12"><path d="M1 1 H7 V8 L4 11 L1 8Z" fill="#0078d7"/></svg>
<div class="t" style="left:764.14px;top:328px;font-family:'Liberation Sans', sans-serif;font-size:12.5px;line-height:12.5px;color:#66003a;font-weight:bold;transform:scaleX(0.9567);transform-origin:0 0;">Size</div>
<div class="r" style="left:794px;top:323px;width:163px;height:23px;background:#f0fff0;border-top:2px solid #696969;border-left:2px solid #696969;border-right:1px solid #fff;border-bottom:1px solid #fff;box-sizing:border-box;"></div>
<svg class="r" style="left:804px;top:328.4px" width="13" height="13" viewBox="0 0 13 13"><circle cx="6.5" cy="6.5" r="6" fill="#fff" stroke="#333" stroke-width="1"/><circle cx="6.5" cy="6.5" r="3.3" fill="#333"/></svg><div class="t" style="left:822.27px;top:329px;font-family:'Liberation Sans', sans-serif;font-size:12.5px;line-height:12.5px;color:#66003a;font-weight:bold;transform:scaleX(0.8950);transform-origin:0 0;">normal</div>
<svg class="r" style="left:867.8px;top:328.4px" width="13" height="13" viewBox="0 0 13 13"><circle cx="6.5" cy="6.5" r="6" fill="#fff" stroke="#333" stroke-width="1"/></svg><div class="t" style="left:886.74px;top:329px;font-family:'Liberation Sans', sans-serif;font-size:12.5px;line-height:12.5px;color:#66003a;font-weight:bold;letter-spacing:0.294px;">x 2</div>
<svg class="r" style="left:912px;top:328.4px" width="13" height="13" viewBox="0 0 13 13"><circle cx="6.5" cy="6.5" r="6" fill="#fff" stroke="#333" stroke-width="1"/></svg><div class="t" style="left:930.54px;top:329px;font-family:'Liberation Sans', sans-serif;font-size:12.5px;line-height:12.5px;color:#66003a;font-weight:bold;letter-spacing:0.450px;">x 5</div>
<div class="t" style="left:765.43px;top:354px;font-family:'Liberation Sans', sans-serif;font-size:12.2px;line-height:12.2px;color:#66003a;font-weight:bold;letter-spacing:-0.080px;">Scroll range x1.25</div>
<div class="r" style="left:876px;top:353.4px;width:13px;height:13px;background:#fff;border:1px solid #333;box-sizing:border-box;"></div>
<div class="t" style="left:978.76px;top:329px;font-family:'Liberation Sans', sans-serif;font-size:12.5px;line-height:12.5px;color:#800080;font-weight:bold;transform:scaleX(0.9159);transform-origin:0 0;">Form opacity</div>
<div class="r" style="left:958px;top:346px;width:115px;height:21px;background:#fdf6c8;"></div>
<div class="r" style="left:964px;top:352.5px;width:101px;height:3px;background:#e7e7e7;border:1px solid #d6d6d6;box-sizing:border-box;"></div>
<div class="r" style="left:968px;top:363px;width:1px;height:3px;background:#b0b0bc;"></div>
<div class="r" style="left:987px;top:363px;width:1px;height:3px;background:#b0b0bc;"></div>
<div class="r" style="left:1006px;top:363px;width:1px;height:3px;background:#b0b0bc;"></div>
<div class="r" style="left:1024px;top:363px;width:1px;height:3px;background:#b0b0bc;"></div>
<div class="r" style="left:1043px;top:363px;width:1px;height:3px;background:#b0b0bc;"></div>
<div class="r" style="left:1062px;top:363px;width:1px;height:3px;background:#b0b0bc;"></div>
<svg class="r" style="left:1058px;top:347px" width="8" height="14" viewBox="0 0 8 14"><path d="M0.5 1 H7.5 V10 L4 13 L0.5 10Z" fill="#0078d7"/></svg>
<div class="t" style="left:749.03px;top:383px;font-family:'Liberation Sans', sans-serif;font-size:12.5px;line-height:12.5px;color:#000;transform:scaleX(0.8658);transform-origin:0 0;">RMS fit 0.1 ±2.5 km</div>
<div class="r" style="left:742px;top:402px;width:328px;height:341px;background:#fff;border-top:2px solid #696969;border-left:2px solid #696969;box-sizing:border-box;"></div>
<div class="r" style="left:749px;top:410px;width:66px;height:2px;background:#4b0082;"></div>
<div class="r" style="left:749px;top:422px;width:66px;height:2px;background:#ff0000;"></div>
<svg class="r" style="left:748.5px;top:432.7px" width="6" height="6" viewBox="0 0 6 6"><circle cx="3" cy="3" r="1.5" fill="none" stroke="#ff66cc" stroke-width="1"/></svg>
<svg class="r" style="left:763.5px;top:432.7px" width="6" height="6" viewBox="0 0 6 6"><circle cx="3" cy="3" r="1.5" fill="none" stroke="#ff66cc" stroke-width="1"/></svg>
<svg class="r" style="left:778.5px;top:432.7px" width="6" height="6" viewBox="0 0 6 6"><circle cx="3" cy="3" r="1.5" fill="none" stroke="#ff66cc" stroke-width="1"/></svg>
<svg class="r" style="left:793.5px;top:432.7px" width="6" height="6" viewBox="0 0 6 6"><circle cx="3" cy="3" r="1.5" fill="none" stroke="#ff66cc" stroke-width="1"/></svg>
<svg class="r" style="left:808.5px;top:432.7px" width="6" height="6" viewBox="0 0 6 6"><circle cx="3" cy="3" r="1.5" fill="none" stroke="#ff66cc" stroke-width="1"/></svg>
<div class="r" style="left:744px;top:404px;width:324px;height:320px;overflow:hidden;"><div class="t" style="left:93.83px;top:3px;font-family:'Liberation Mono', monospace;font-size:12.5px;line-height:12.5px;color:#000;letter-spacing:0.68px;-webkit-text-stroke:0.25px #000;">1    D Herald, near Murrumba</div>
<div class="t" style="left:93.83px;top:15px;font-family:'Liberation Mono', monospace;font-size:12.5px;line-height:12.5px;color:#000;letter-spacing:0.68px;-webkit-text-stroke:0.25px #000;">2    W Hanna, near Yass, Nsw</div>
<div class="t" style="left:93.95px;top:27px;font-family:'Liberation Mono', monospace;font-size:12.5px;line-height:12.5px;color:#000;letter-spacing:0.68px;-webkit-text-stroke:0.25px #000;">3(P) Predicted</div>
</div><div class="r" style="left:1068px;top:404px;width:1px;height:336px;background:#e3e3e3;"></div>
<div class="r" style="left:744px;top:739px;width:325px;height:1px;background:#e3e3e3;"></div>
<div class="r" style="left:744px;top:724px;width:324px;height:15px;background:#f0f0f0;"></div>
<div class="r" style="left:761px;top:724px;width:221px;height:15px;background:#cdcdcd;"></div>
<svg class="r" style="left:0;top:0" width="1087" height="783" viewBox="0 0 1087 783"><polyline points="752,727.5 748.5,731.5 752,735.5" fill="none" stroke="#606060" stroke-width="2"/><polyline points="1058,727.5 1061.5,731.5 1058,735.5" fill="none" stroke="#606060" stroke-width="2"/></svg>
</body></html>
